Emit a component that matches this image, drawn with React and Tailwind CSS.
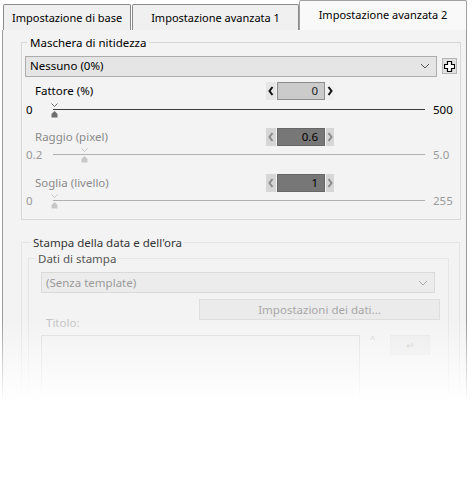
import React from "react";

const font = { fontFamily: '"Noto Sans", "Open Sans", sans-serif' };

const Thumb = ({ disabled }) => (
  <svg width="9" height="15" viewBox="0 0 9 15" className="absolute top-[-6px]">
    <path d="M1.5 0.5 L4.5 3.5 L7.5 0.5" stroke={disabled ? "#c4c4c4" : "#6a6a6a"} fill="none" strokeWidth="1" />
    <path d="M4.5 8 L7.5 11 L7.5 14.5 L1.5 14.5 L1.5 11 Z" fill={disabled ? "#c8c8c8" : "#6e6e6e"} />
  </svg>
);

const Chevron = ({ dir, color }) => (
  <svg width="8" height="12" viewBox="0 0 8 12">
    {dir === "left" ? (
      <path d="M5.5 2 L2.5 6 L5.5 10" stroke={color} strokeWidth="2" fill="none" />
    ) : (
      <path d="M2.5 2 L5.5 6 L2.5 10" stroke={color} strokeWidth="2" fill="none" />
    )}
  </svg>
);

function ParamRow({ label, value, disabled }) {
  return (
    <div className="flex items-center h-[18px]">
      <span className={`ml-[10px] w-[231px] ${disabled ? "text-[#8a8a8a]" : "text-black"}`}>{label}</span>
      <div className="flex items-center gap-[1px]">
        <div className={`w-[10px] h-[18px] flex items-center justify-center ${disabled ? "bg-[#d6d6d6]" : "bg-[#e6e6e6]"}`}>
          <Chevron dir="left" color={disabled ? "#8a8a8a" : "#111"} />
        </div>
        <div
          className={`w-[48px] h-[18px] border flex items-center justify-end pr-[6px] ${
            disabled ? "bg-[#777] border-[#666] text-black" : "bg-[#cbcbcb] border-[#8c8c8c] text-[#222]"
          }`}
        >
          {value}
        </div>
        <div className={`w-[8px] h-[18px] flex items-center justify-center ${disabled ? "bg-[#d6d6d6]" : "bg-[#f0f0f0]"}`}>
          <Chevron dir="right" color={disabled ? "#8a8a8a" : "#111"} />
        </div>
      </div>
    </div>
  );
}

function SliderRow({ min, max, pos, disabled }) {
  const c = disabled ? "text-[#9a9a9a]" : "text-black";
  return (
    <div className="flex items-center h-[14px]">
      <span className={`w-[28px] pl-[1px] ${c}`}>{min}</span>
      <div className="relative flex-1 h-[14px] flex items-center mr-[8px]">
        <div className={`w-full h-[1px] ${disabled ? "bg-[#b0b0b0]" : "bg-[#3a3a3a]"}`} />
        <div className="absolute top-[6px]" style={{ left: pos }}>
          <Thumb disabled={disabled} />
        </div>
      </div>
      <span className={`w-[24px] ${c}`}>{max}</span>
    </div>
  );
}

export default function App() {
  return (
    <div className="relative w-[473px] h-[479px] bg-white overflow-hidden text-[11.5px] leading-none" style={font}>
      <div className="flex items-end h-[30px] pl-[3px] text-[11px]">
        <div className="w-[128px] h-[26px] border border-b-0 border-[#8a8a8a] rounded-t-[2px] bg-[#f0f0f0] flex items-center pl-[8px] text-black">
          Impostazione di base
        </div>
        <div className="w-[167px] h-[26px] ml-[1px] border border-b-0 border-[#8a8a8a] rounded-t-[2px] bg-[#f0f0f0] flex items-center justify-center text-black">
          Impostazione avanzata 1
        </div>
        <div className="w-[168px] h-[30px] border border-b-0 border-[#a0a0a0] rounded-t-[2px] bg-[#f9f9f9] flex items-center justify-center pb-[2px] text-black">
          Impostazione avanzata 2
        </div>
      </div>
      <div className="ml-[2px] w-[465px] h-[440px] border border-t-0 border-[#9a9a9a] bg-[#f3f3f3] pt-[7px] pl-[18px]">
        <fieldset className="w-[439px] h-[183px] border border-[#d8d8d8] px-[3px] pb-0">
          <legend className="ml-[2px] px-[3px] text-black">Maschera di nitidezza</legend>
          <div className="flex items-center mt-[7px]">
            <div className="w-[412px] h-[21px] border border-[#adadad] bg-[#e5e5e5] flex items-center justify-between pl-[4px] pr-[6px] text-black">
              <span>Nessuno (0%)</span>
              <svg width="10" height="6" viewBox="0 0 10 6">
                <path d="M1 1 L5 5 L9 1" stroke="#555" fill="none" />
              </svg>
            </div>
            <div className="ml-[5px] w-[15px] h-[16px] border border-[#b5b5b5] bg-[#e1e1e1] flex items-center justify-center">
              <svg width="11" height="11" viewBox="0 0 11 11">
                <path d="M3.5 0.5 H7.5 V3.5 H10.5 V7.5 H7.5 V10.5 H3.5 V7.5 H0.5 V3.5 H3.5 Z" fill="#fff" stroke="#000" strokeWidth="1.2" />
              </svg>
            </div>
          </div>
          <div className="mt-[5px] flex flex-col">
            <ParamRow label="Fattore (%)" value="0" />
            <div className="mt-[3px]">
              <SliderRow min="0" max="500" pos={-3} />
            </div>
            <div className="mt-[11px]">
              <ParamRow label="Raggio (pixel)" value="0.6" disabled />
            </div>
            <div className="mt-[2px]">
              <SliderRow min="0.2" max="5.0" pos={27} disabled />
            </div>
            <div className="mt-[12px]">
              <ParamRow label="Soglia (livello)" value="1" disabled />
            </div>
            <div className="mt-[2px]">
              <SliderRow min="0" max="255" pos={-3} disabled />
            </div>
          </div>
        </fieldset>
        <fieldset className="mt-[17px] w-[439px] h-[170px] border border-[#e4e4e4] px-[6px]">
          <legend className="ml-[3px] px-[2px] text-[#333]">Stampa della data e dell'ora</legend>
          <fieldset className="mt-[4px] w-[421px] h-[150px] border border-[#e6e6e6] px-[6px]">
            <legend className="ml-[1px] px-[2px] text-[#555]">Dati di stampa</legend>
            <div className="ml-[6px]">
              <div className="mt-[8px] w-[394px] h-[21px] border border-[#dadada] bg-[#ececec] flex items-center justify-between pl-[4px] pr-[6px] text-[#9a9a9a]">
                <span>(Senza template)</span>
                <svg width="10" height="6" viewBox="0 0 10 6">
                  <path d="M1 1 L5 5 L9 1" stroke="#aaa" fill="none" />
                </svg>
              </div>
              <div className="mt-[6px] ml-[158px] w-[241px] h-[21px] border border-[#dedede] bg-[#ebebeb] flex items-center justify-center text-[#a8a8a8]">
                Impostazioni dei dati...
              </div>
              <div className="flex">
                <div className="flex flex-col">
                  <span className="ml-[5px] mt-[-3px] text-[#c4c4c4]">Titolo:</span>
                  <div className="mt-[6px] w-[319px] h-[70px] border border-[#dcdcdc] bg-[#f2f2f2]" />
                </div>
                <div className="ml-[10px] mt-[14px] text-[#c8c8c8] text-[9px]">^</div>
                <div className="ml-[15px] mt-[15px] w-[40px] h-[20px] bg-[#ececec] border border-[#e8e8e8] flex items-center justify-center text-[#c8c8c8] text-[10px]">
                  ↵
                </div>
              </div>
            </div>
          </fieldset>
        </fieldset>
      </div>
      <div className="absolute left-0 right-0 top-[320px] bottom-0 bg-[linear-gradient(to_bottom,rgba(255,255,255,0)_0px,#ffffff_82px)]" />
    </div>
  );
}
